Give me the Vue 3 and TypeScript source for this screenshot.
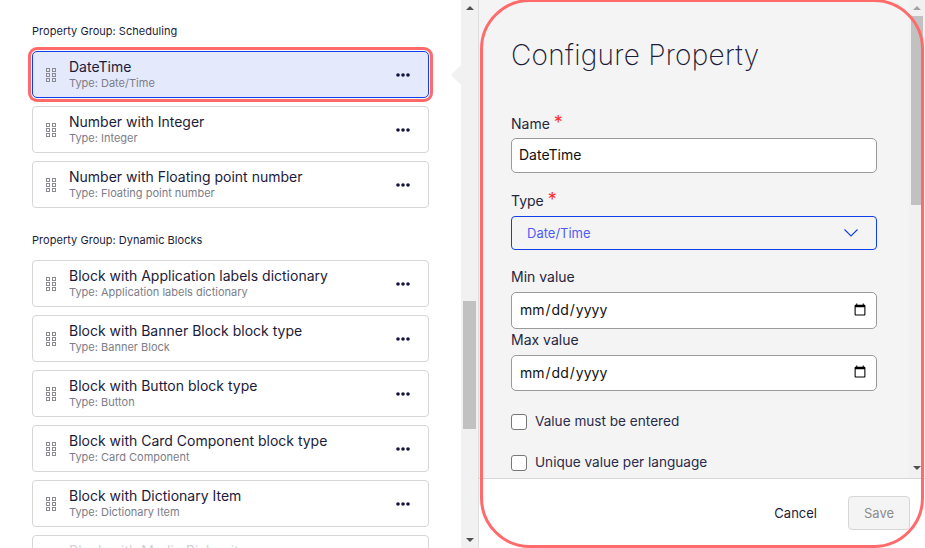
<script setup lang="ts">
interface Prop { name: string; type: string; active?: boolean; faded?: boolean }
interface Group { title: string; props: Prop[] }
const groups: Group[] = [
  { title: 'Property Group: Scheduling', props: [
    { name: 'DateTime', type: 'Date/Time', active: true },
    { name: 'Number with Integer', type: 'Integer' },
    { name: 'Number with Floating point number', type: 'Floating point number' },
  ] },
  { title: 'Property Group: Dynamic Blocks', props: [
    { name: 'Block with Application labels dictionary', type: 'Application labels dictionary' },
    { name: 'Block with Banner Block block type', type: 'Banner Block' },
    { name: 'Block with Button block type', type: 'Button' },
    { name: 'Block with Card Component block type', type: 'Card Component' },
    { name: 'Block with Dictionary Item', type: 'Dictionary Item' },
    { name: 'Block with Media Picker item', type: 'Media Picker', faded: true },
  ] },
]
const dots = [0, 1, 2]
</script>

<template>
  <div class="root">
    <section class="list">
      <div v-for="g in groups" :key="g.title" class="group">
        <h3 class="group-title">{{ g.title }}</h3>
        <div v-for="p in g.props" :key="p.name" class="card" :class="{ active: p.active, faded: p.faded }">
          <svg class="grip" width="10" height="14" viewBox="0 0 10 14" fill="none" stroke="#8a8a90" stroke-width="1">
            <template v-for="r in dots" :key="r">
              <rect :x="0.5" :y="0.5 + r * 5" width="3" height="3" />
              <rect :x="6.5" :y="0.5 + r * 5" width="3" height="3" />
            </template>
          </svg>
          <div class="card-text">
            <div class="card-name">{{ p.name }}</div>
            <div class="card-type">Type: {{ p.type }}</div>
          </div>
          <svg class="more" width="14" height="4" viewBox="0 0 14 4" fill="#14143c">
            <circle cx="2" cy="2" r="1.8" /><circle cx="7" cy="2" r="1.8" /><circle cx="12" cy="2" r="1.8" />
          </svg>
        </div>
      </div>
      <span class="pointer"></span>
    </section>

    <div class="sb sb-left">
      <span class="tri up"></span>
      <div class="track"><div class="thumb"></div></div>
      <span class="tri down"></span>
    </div>

    <section class="panel">
      <div class="panel-body">
        <form class="form">
          <h1 class="title">Configure Property</h1>

          <label class="label label-name">Name <span class="req">*</span></label>
          <input class="input text" type="text" value="DateTime" />

          <label class="label label-type">Type <span class="req">*</span></label>
          <div class="select">
            <span>Date/Time</span>
            <svg width="14" height="8" viewBox="0 0 14 8" fill="none" stroke="#0f3fe8" stroke-width="1.1">
              <path d="M0.5 0.5l6.5 6.5 6.5-6.5" />
            </svg>
          </div>

          <label class="label label-min">Min value</label>
          <input class="input date" type="date" />
          <label class="label label-max">Max value</label>
          <input class="input date date2" type="date" />

          <label class="check first"><span class="box"></span>Value must be entered</label>
          <label class="check second"><span class="box"></span>Unique value per language</label>
        </form>
        <div class="sb sb-right">
          <span class="tri up"></span>
          <div class="track"><div class="thumb"></div></div>
          <span class="tri down"></span>
        </div>
      </div>
      <footer class="footer">
        <button type="button" class="cancel">Cancel</button>
        <button type="button" class="save">Save</button>
      </footer>
    </section>

    <div class="ring"></div>
  </div>
</template>

<style>
html, body { margin: 0; background: #fff; overflow: hidden; }
</style>

<style scoped>
.root {
  position: relative;
  display: flex;
  width: 925px;
  height: 548px;
  overflow: hidden;
  font-family: Inter, "Noto Sans", sans-serif;
  color: #1b1b3a;
  background: #fff;
}
.list {
  position: relative;
  width: 461px;
  flex: none;
  box-sizing: border-box;
  padding: 24px 32px 0;
  overflow: hidden;
}
.group { margin-bottom: 25px; }
.group-title {
  margin: 0 0 13px;
  font-size: 11px;
  line-height: 14px;
  font-weight: 400;
  letter-spacing: 0.03px;
}
.card {
  display: flex;
  align-items: center;
  box-sizing: border-box;
  height: 47px;
  margin-bottom: 8px;
  padding: 0 18px 0 13px;
  background: #fff;
  border: 1px solid #d6d6d6;
  border-radius: 4px;
}
.card.active {
  background: #e4e9fc;
  border-color: #0f3fe8;
  box-shadow: 0 0 0 1px #f6f6fb, 0 0 0 4px #ff6b6b;
  border-radius: 5px;
}
.card.faded .card-text,
.card.faded .grip,
.card.faded .more { opacity: 0.2; }
.grip { flex: none; margin-right: 13px; }
.card-text { flex: 1; min-width: 0; }
.card-name { font-size: 14px; line-height: 17px; margin-top: -2px; }
.card-type { font-size: 11px; line-height: 14px; color: #7d7d88; margin-top: 1px; }
.more { flex: none; }
.pointer {
  position: absolute;
  left: 451px;
  top: 65px;
  width: 0;
  height: 0;
  border-top: 10px solid transparent;
  border-bottom: 10px solid transparent;
  border-right: 10px solid #f1f1f1;
}

.sb {
  display: flex;
  flex-direction: column;
  align-items: center;
  flex: none;
  background: #f1f1f1;
}
.sb-left { width: 17px; height: 548px; border-right: 1px solid #dedede; }
.track { position: relative; flex: 1; width: 100%; }
.thumb { position: absolute; background: #c1c1c1; }
.sb-left .thumb { left: 2px; right: 2px; top: 285px; height: 128px; }
.tri { flex: none; width: 0; height: 0; margin: 6px 0; border-left: 4px solid transparent; border-right: 4px solid transparent; }
.tri.up { border-bottom: 4px solid #505050; }
.tri.down { border-top: 4px solid #505050; }

.panel {
  flex: 1;
  min-width: 0;
  display: flex;
  flex-direction: column;
  background: #fff;
}
.panel-body {
  display: flex;
  height: 479px;
  background: #f4f4f4;
  border-bottom: 1px solid #d6d6d6;
  box-sizing: border-box;
}
.form {
  flex: 1;
  min-width: 0;
  display: flex;
  flex-direction: column;
  align-items: flex-start;
  padding: 38px 0 0 32px;
  overflow: hidden;
}
.title {
  margin: 0;
  font-size: 28px;
  line-height: 34px;
  font-weight: 200;
  letter-spacing: 0.27px;
  color: #1b1b3a;
}
.label { font-size: 14px; line-height: 17px; color: #26263f; }
.label-name { margin-top: 43px; }
.label-type { margin-top: 19px; }
.label-min { margin-top: 18px; }
.label-max { margin-top: 2px; }
.req { color: #ff2d2d; font-size: 18px; line-height: 14px; }
.input {
  box-sizing: border-box;
  width: 366px;
  margin: 6px 0 0;
  padding: 0 7px;
  border: 1px solid #9a9a9a;
  border-radius: 5px;
  background: #fff;
  font-family: inherit;
  font-size: 14px;
  color: #111;
  outline: none;
}
.text { height: 35px; padding-bottom: 3px; }
.date { height: 37px; margin-top: 7px; padding-bottom: 2px; }
.date2 { height: 36px; margin-top: 7px; }
.select {
  box-sizing: border-box;
  width: 366px;
  height: 34px;
  margin-top: 7px;
  padding: 0 18px 0 15px;
  display: flex;
  align-items: center;
  justify-content: space-between;
  border: 1px solid #0f3fe8;
  border-radius: 4px;
  font-size: 13px;
  color: #4f5cf5;
}
.check {
  display: flex;
  align-items: center;
  gap: 8px;
  font-size: 13.6px;
  line-height: 17px;
  color: #2b2b4a;
}
.check.first { margin-top: 22px; }
.check.second { margin-top: 24px; }
.box {
  display: block;
  box-sizing: border-box;
  width: 16px;
  height: 16px;
  background: #fff;
  border: 1px solid #777;
  border-radius: 3px;
}
.sb-right { width: 16px; height: 478px; }
.sb-right .thumb { left: 2px; right: 2px; top: 0; height: 189px; }
.sb-right .tri.up { margin: 6px 0 6px; border-bottom-color: #a3a3a3; }
.sb-right .tri.down { margin: 4px 0 8px; }
.footer {
  flex: 1;
  display: flex;
  align-items: flex-start;
  justify-content: flex-end;
  padding: 17px 15px 0 0;
}
.cancel {
  height: 34px;
  margin-right: 31px;
  padding: 0;
  background: none;
  border: 0;
  font: 400 13px Inter, sans-serif;
  color: #1b1b3a;
}
.save {
  width: 62px;
  height: 34px;
  padding: 0;
  background: #f4f4f4;
  border: 1px solid #d6d6d6;
  border-radius: 4px;
  font: 400 13px Inter, sans-serif;
  color: #8d8d8d;
}
.ring {
  position: absolute;
  left: 480px;
  top: -1px;
  width: 444px;
  height: 549px;
  box-sizing: border-box;
  border: 3px solid #ff6b6b;
  border-radius: 50px;
  pointer-events: none;
}
</style>
